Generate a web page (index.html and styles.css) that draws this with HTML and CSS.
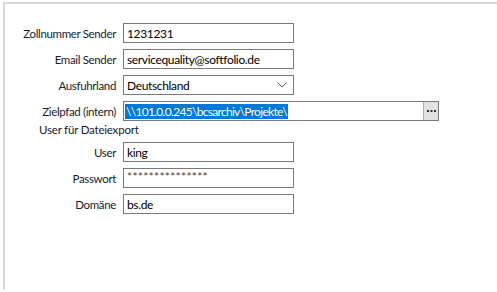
FILE: index.html
```html
<!DOCTYPE html>
<html lang="de">
<head>
  <meta charset="UTF-8">
  <title>Export Einstellungen</title>
  <link rel="stylesheet" href="styles.css">
</head>
<body>
  <div class="panel">
    <div class="row">
      <label class="label">Zollnummer Sender</label>
      <div class="field"><span class="value">1231231</span></div>
    </div>
    <div class="row">
      <label class="label">Email Sender</label>
      <div class="field"><span class="value">servicequality@softfolio.de</span></div>
    </div>
    <div class="row">
      <label class="label">Ausfuhrland</label>
      <div class="field select">
        <span class="value">Deutschland</span>
        <svg class="chevron" width="10" height="6" viewBox="0 0 10 6"><path d="M0.5 0.5 L5 5 L9.5 0.5" fill="none" stroke="#606060" stroke-width="1"/></svg>
      </div>
    </div>
    <div class="row">
      <label class="label">Zielpfad (intern)</label>
      <div class="field path">
        <span class="value selected">\\101.0.0.245\bcsarchiv\Projekte\</span>
        <span class="browse">
          <svg width="9" height="2" viewBox="0 0 9 2"><rect x="0" y="0" width="2" height="2" fill="#333"/><rect x="3.5" y="0" width="2" height="2" fill="#333"/><rect x="7" y="0" width="2" height="2" fill="#333"/></svg>
        </span>
      </div>
    </div>
    <div class="section">User für Dateiexport</div>
    <div class="row">
      <label class="label">User</label>
      <div class="field"><span class="value">king</span></div>
    </div>
    <div class="row">
      <label class="label">Passwort</label>
      <div class="field"><span class="value secret">***************</span></div>
    </div>
    <div class="row">
      <label class="label">Domäne</label>
      <div class="field"><span class="value">bs.de</span></div>
    </div>
  </div>
</body>
</html>
```

FILE: styles.css
```css
body {
  margin: 0;
  background-color: #fff;
  font-family: Lato, "Noto Sans", sans-serif;
  font-size: 12px;
  color: #1a1a2e;
  overflow: hidden;
}

.panel {
  box-sizing: border-box;
  margin: 2px 0 0 3px;
  height: 288px;
  border-top: 2px solid #dadada;
  border-left: 2px solid #dadada;
  padding-top: 19px;
}

.row {
  display: flex;
  align-items: center;
  height: 20px;
  margin-bottom: 6px;
}

.label {
  width: 111px;
  text-align: right;
  margin-right: 7px;
  white-space: nowrap;
  font-size: 11.5px;
  letter-spacing: -0.35px;
}

.field {
  box-sizing: border-box;
  display: flex;
  align-items: center;
  width: 171px;
  height: 20px;
  border: 1px solid #7a7a7a;
  padding-left: 3px;
  color: #000;
  background-color: #fff;
}

.value {
  white-space: nowrap;
  letter-spacing: -0.35px;
}

.select {
  justify-content: space-between;
  padding-right: 6px;
}

.path {
  width: 316px;
  padding-left: 1px;
  padding-right: 0;
}

.selected {
  background-color: #0078d7;
  color: #fff;
  line-height: 15px;
  padding: 0 1px;
  letter-spacing: -0.7px;
}

.browse {
  box-sizing: border-box;
  display: flex;
  align-items: center;
  justify-content: center;
  width: 15px;
  height: 18px;
  margin-left: auto;
  background-color: #e1e1e1;
  border-left: 1px solid #adadad;
}

.secret {
  color: #5a3a1a;
  font-size: 12px;
  letter-spacing: 0.3px;
  line-height: 12px;
  margin-top: -2px;
}

.section {
  height: 16px;
  line-height: 16px;
  margin: -5px 0 4px 34px;
  font-size: 11.5px;
  letter-spacing: -0.2px;
}
```
